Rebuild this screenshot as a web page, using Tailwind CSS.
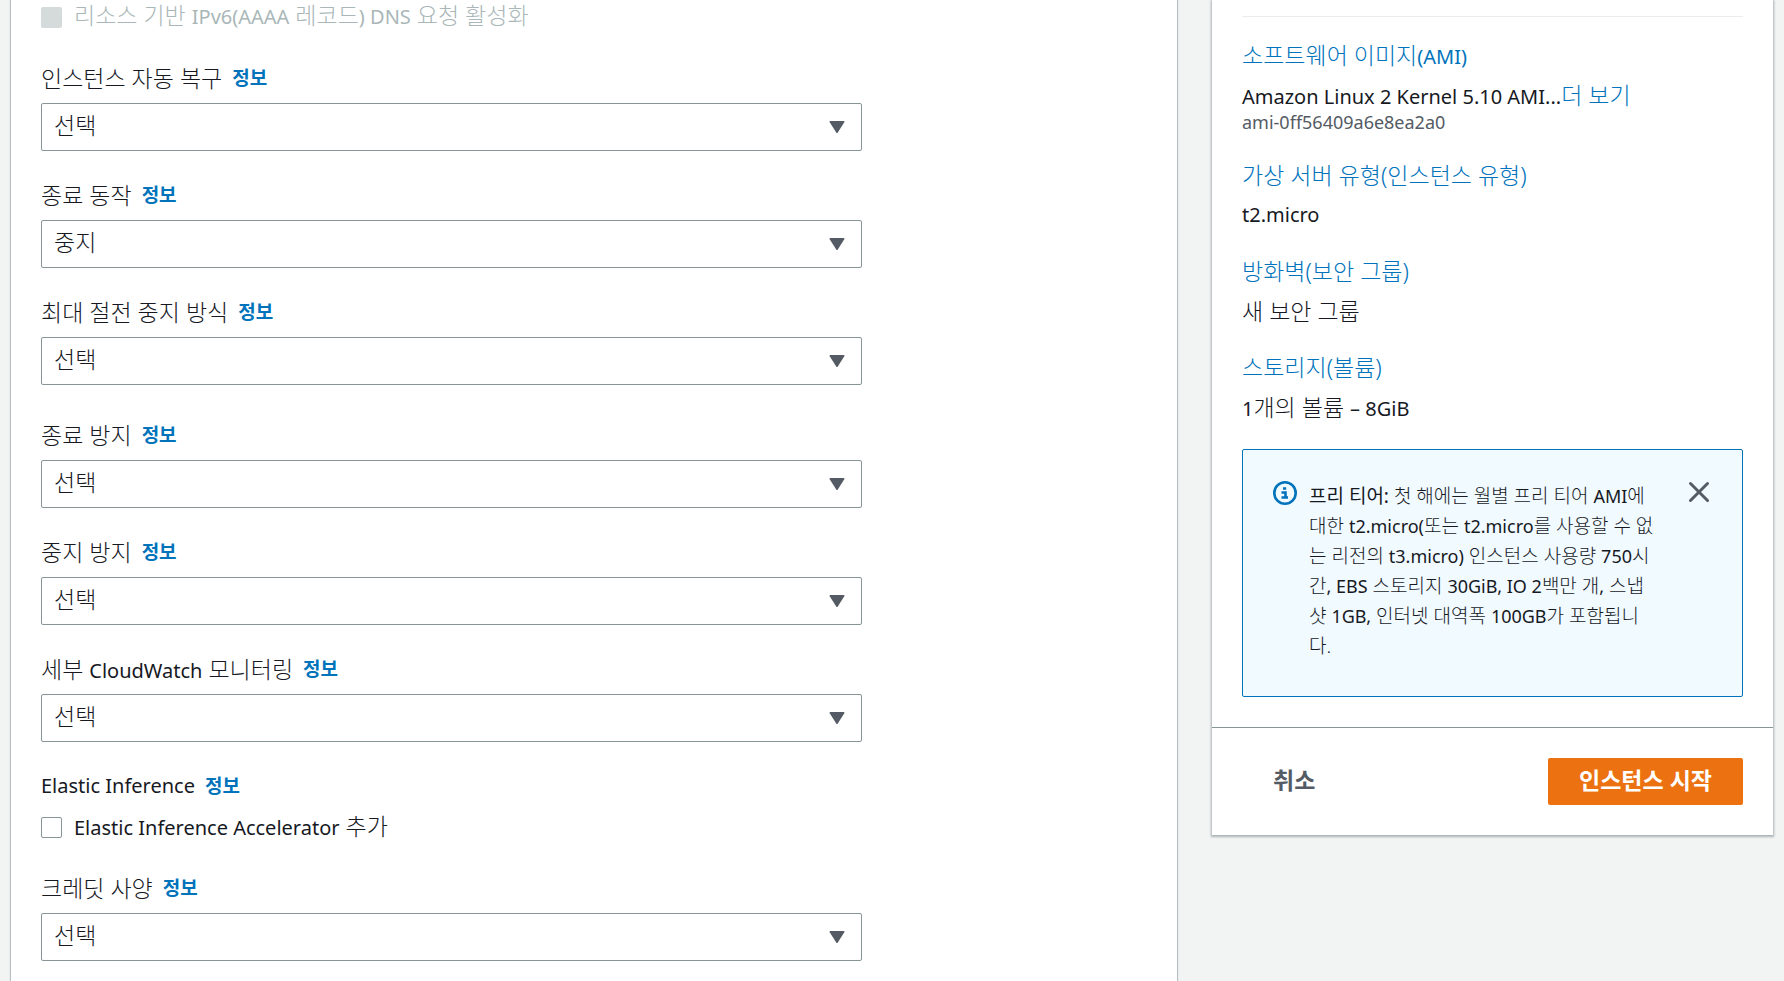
<!DOCTYPE html>
<html lang="ko">
<head>
  <meta charset="UTF-8" />
  <meta name="viewport" content="width=device-width, initial-scale=1.0"/>
  <title>인스턴스 시작</title>
  <script src="https://cdn.jsdelivr.net/npm/@tailwindcss/browser@4"></script>
</head>
<body class="bg-[#f2f3f3] text-[#16191f] font-['Noto_Sans','Noto_Sans_CJK_KR',sans-serif] font-light text-[23px] leading-[30px] h-screen overflow-hidden">
  <div class="flex items-start gap-[35px] px-[11px] h-full">

    <!-- Advanced details form -->
    <main class="flex-1 h-full bg-white px-[30px] shadow-[0_0_1px_1px_#b8c0c2]">
      <form class="max-w-[821px]">
        <div class="flex items-center gap-3 h-[34px] mb-[29px] text-[#aab7b8]">
          <input type="checkbox" id="ipv6" disabled class="appearance-none size-[21px] rounded-xs bg-[#d5dbdb]" />
          <label for="ipv6" class="pb-1">리소스 기반 <span class="text-[20px] leading-none font-normal">IPv6(AAAA</span> 레코드<span class="text-[20px] leading-none font-normal">) DNS</span> 요청 활성화</label>
        </div>

        <div class="mb-[29px]">
          <div class="flex items-center gap-2.5 mb-2.5">
            <label for="recovery">인스턴스 자동 복구</label>
            <a href="#" class="text-[19px] font-bold text-[#0073bb]">정보</a>
          </div>
          <div class="relative">
            <select id="recovery" class="appearance-none w-full h-12 px-3 pb-1 border border-[#879596] rounded-xs bg-white"><option>선택</option></select>
            <svg class="absolute right-[17px] top-[18px] pointer-events-none" width="16" height="12" viewBox="0 0 16 12" fill="#545b64"><path d="M1.5 0h13q1.5 0 .8 1.3L8.8 11.4q-.8 1-1.6 0L.7 1.3Q0 0 1.5 0z"/></svg>
          </div>
        </div>

        <div class="mb-[29px]">
          <div class="flex items-center gap-2.5 mb-2.5">
            <label for="shutdown">종료 동작</label>
            <a href="#" class="text-[19px] font-bold text-[#0073bb]">정보</a>
          </div>
          <div class="relative">
            <select id="shutdown" class="appearance-none w-full h-12 px-3 pb-1 border border-[#879596] rounded-xs bg-white"><option>중지</option></select>
            <svg class="absolute right-[17px] top-[18px] pointer-events-none" width="16" height="12" viewBox="0 0 16 12" fill="#545b64"><path d="M1.5 0h13q1.5 0 .8 1.3L8.8 11.4q-.8 1-1.6 0L.7 1.3Q0 0 1.5 0z"/></svg>
          </div>
        </div>

        <div class="mb-[35px]">
          <div class="flex items-center gap-2.5 mb-2.5">
            <label for="hibernate">최대 절전 중지 방식</label>
            <a href="#" class="text-[19px] font-bold text-[#0073bb]">정보</a>
          </div>
          <div class="relative">
            <select id="hibernate" class="appearance-none w-full h-12 px-3 pb-1 border border-[#879596] rounded-xs bg-white"><option>선택</option></select>
            <svg class="absolute right-[17px] top-[18px] pointer-events-none" width="16" height="12" viewBox="0 0 16 12" fill="#545b64"><path d="M1.5 0h13q1.5 0 .8 1.3L8.8 11.4q-.8 1-1.6 0L.7 1.3Q0 0 1.5 0z"/></svg>
          </div>
        </div>

        <div class="mb-[29px]">
          <div class="flex items-center gap-2.5 mb-2.5">
            <label for="termination">종료 방지</label>
            <a href="#" class="text-[19px] font-bold text-[#0073bb]">정보</a>
          </div>
          <div class="relative">
            <select id="termination" class="appearance-none w-full h-12 px-3 pb-1 border border-[#879596] rounded-xs bg-white"><option>선택</option></select>
            <svg class="absolute right-[17px] top-[18px] pointer-events-none" width="16" height="12" viewBox="0 0 16 12" fill="#545b64"><path d="M1.5 0h13q1.5 0 .8 1.3L8.8 11.4q-.8 1-1.6 0L.7 1.3Q0 0 1.5 0z"/></svg>
          </div>
        </div>

        <div class="mb-[29px]">
          <div class="flex items-center gap-2.5 mb-2.5">
            <label for="stop">중지 방지</label>
            <a href="#" class="text-[19px] font-bold text-[#0073bb]">정보</a>
          </div>
          <div class="relative">
            <select id="stop" class="appearance-none w-full h-12 px-3 pb-1 border border-[#879596] rounded-xs bg-white"><option>선택</option></select>
            <svg class="absolute right-[17px] top-[18px] pointer-events-none" width="16" height="12" viewBox="0 0 16 12" fill="#545b64"><path d="M1.5 0h13q1.5 0 .8 1.3L8.8 11.4q-.8 1-1.6 0L.7 1.3Q0 0 1.5 0z"/></svg>
          </div>
        </div>

        <div class="mb-[29px]">
          <div class="flex items-center gap-2.5 mb-2.5">
            <label for="monitoring">세부 <span class="text-[20px] leading-none font-normal">CloudWatch</span> 모니터링</label>
            <a href="#" class="text-[19px] font-bold text-[#0073bb]">정보</a>
          </div>
          <div class="relative">
            <select id="monitoring" class="appearance-none w-full h-12 px-3 pb-1 border border-[#879596] rounded-xs bg-white"><option>선택</option></select>
            <svg class="absolute right-[17px] top-[18px] pointer-events-none" width="16" height="12" viewBox="0 0 16 12" fill="#545b64"><path d="M1.5 0h13q1.5 0 .8 1.3L8.8 11.4q-.8 1-1.6 0L.7 1.3Q0 0 1.5 0z"/></svg>
          </div>
        </div>

        <div class="mb-[29px]">
          <div class="flex items-center gap-2.5 mb-2.5">
            <span class="text-[20px] font-normal">Elastic Inference</span>
            <a href="#" class="text-[19px] font-bold text-[#0073bb]">정보</a>
          </div>
          <div class="flex items-center gap-3 h-[33px]">
            <input type="checkbox" id="inference" class="appearance-none size-[21px] rounded-xs border border-[#879596] bg-white" />
            <label for="inference" class="pb-1"><span class="text-[20px] leading-none font-normal">Elastic Inference Accelerator</span> 추가</label>
          </div>
        </div>

        <div>
          <div class="flex items-center gap-2.5 mb-2.5">
            <label for="credit">크레딧 사양</label>
            <a href="#" class="text-[19px] font-bold text-[#0073bb]">정보</a>
          </div>
          <div class="relative">
            <select id="credit" class="appearance-none w-full h-12 px-3 pb-1 border border-[#879596] rounded-xs bg-white"><option>선택</option></select>
            <svg class="absolute right-[17px] top-[18px] pointer-events-none" width="16" height="12" viewBox="0 0 16 12" fill="#545b64"><path d="M1.5 0h13q1.5 0 .8 1.3L8.8 11.4q-.8 1-1.6 0L.7 1.3Q0 0 1.5 0z"/></svg>
          </div>
        </div>
      </form>
    </main>

    <!-- Summary panel -->
    <aside class="w-[561px] shrink-0 bg-white shadow-[0_1px_2px_1px_#aab3b6]">
      <div class="px-[30px] pt-4 pb-[30px]">
        <div class="border-t border-[#eaeded] pt-[23px] flex flex-col gap-[26px]">
          <div>
            <a href="#" class="block mb-2.5 text-[#0073bb]">소프트웨어 이미지<span class="text-[20px] leading-none font-normal">(AMI)</span></a>
            <p><span class="text-[20px] leading-none font-normal">Amazon Linux 2 Kernel 5.10 AMI...</span><a href="#" class="text-[#0073bb]">더 보기</a></p>
            <p class="text-[18px] leading-6 font-normal text-[#545b64]">ami-0ff56409a6e8ea2a0</p>
          </div>
          <div>
            <a href="#" class="block mb-2.5 text-[#0073bb]">가상 서버 유형(인스턴스 유형)</a>
            <p class="text-[20px] font-normal">t2.micro</p>
          </div>
          <div>
            <a href="#" class="block mb-2.5 text-[#0073bb]">방화벽(보안 그룹)</a>
            <p>새 보안 그룹</p>
          </div>
          <div>
            <a href="#" class="block mb-2.5 text-[#0073bb]">스토리지(볼륨)</a>
            <p><span class="text-[20px] leading-none font-normal">1</span>개의 볼륨 <span class="text-[20px] leading-none font-normal">– 8GiB</span></p>
          </div>

          <div class="mt-px flex items-start border border-[#0073bb] rounded-xs bg-[#f1faff] pl-[30px] pr-8 pt-[31px] pb-[35px]">
            <svg class="shrink-0 mr-3" width="24" height="24" viewBox="0 0 24 24" fill="none" stroke="#0073bb">
              <circle cx="12" cy="12" r="10.7" stroke-width="2.6"/>
              <path d="M10 7.5h3.2M8.500 11.500h4v4.500M8.500 16.500h6.500" stroke-width="2.6"/>
            </svg>
            <p class="flex-1 text-[19px]"><b>프리 티어:</b> 첫 해에는 월별 프리 티어 <span class="text-[18px] leading-none font-normal">AMI</span>에 대한 <span class="text-[18px] leading-none font-normal">t2.micro(</span>또는 <span class="text-[18px] leading-none font-normal">t2.micro</span>를 사용할 수 없는 리전의 <span class="text-[18px] leading-none font-normal">t3.micro)</span> 인스턴스 사용량 <span class="text-[18px] leading-none font-normal">750</span>시간<span class="text-[18px] leading-none font-normal">, EBS</span> 스토리지 <span class="text-[18px] leading-none font-normal">30GiB, IO 2</span>백만 개<span class="text-[18px] leading-none font-normal">,</span> 스냅샷 <span class="text-[18px] leading-none font-normal">1GB,</span> 인터넷 대역폭 <span class="text-[18px] leading-none font-normal">100GB</span>가 포함됩니다.</p>
            <button type="button" aria-label="닫기" class="shrink-0 ml-8">
              <svg width="22" height="22" viewBox="0 0 22 22" stroke="#545b64" stroke-width="3" stroke-linecap="round"><path d="M2.5 2.5l17 17M19.5 2.5l-17 17"/></svg>
            </button>
          </div>
        </div>
      </div>
      <div class="flex items-center justify-between border-t border-[#879596] px-[30px] py-[30px] font-bold">
        <button type="button" class="px-[31px] pb-1 text-[#545b64]">취소</button>
        <button type="button" class="h-[47px] px-[31px] pb-1 rounded-xs bg-[#ec7211] text-white">인스턴스 시작</button>
      </div>
    </aside>

  </div>
</body>
</html>
